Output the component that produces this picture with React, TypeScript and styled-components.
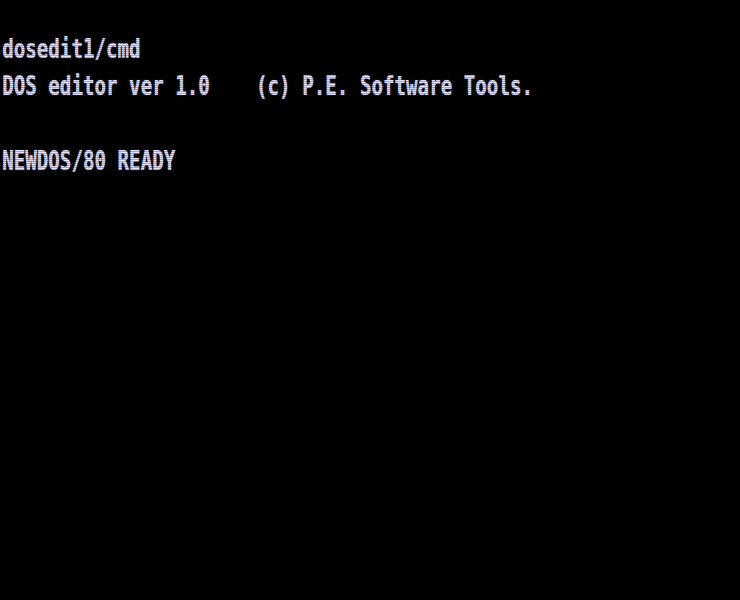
import React from "react";
import styled, { createGlobalStyle } from "styled-components";

const Global = createGlobalStyle`
  html, body {
    margin: 0;
    padding: 0;
    background: #000;
  }
  #root {
    width: 740px;
    height: 600px;
  }
`;

const Screen = styled.div`
  position: relative;
  width: 740px;
  height: 600px;
  background: #000;
  display: grid;
  grid-template-rows: repeat(16, 37.5px);
  overflow: hidden;

  &::after {
    content: "";
    position: absolute;
    inset: 0;
    pointer-events: none;
    background: repeating-linear-gradient(
      to bottom,
      rgba(0, 0, 0, 0) 0px,
      rgba(0, 0, 0, 0) 1px,
      rgba(0, 0, 0, 0.28) 1px,
      rgba(0, 0, 0, 0.28) 2px
    );
  }
`;

const Line = styled.div`
  height: 37.5px;
  padding-left: 3px;
  font-family: "DejaVu Sans Mono", "Liberation Mono", monospace;
  font-weight: bold;
  font-size: 27px;
  line-height: 22px;
  color: #e4e4ff;
  white-space: pre;
  transform: scaleX(0.71);
  transform-origin: 0 0;
  text-shadow: 0 0 1.5px rgba(200, 200, 255, 0.7);
`;

const lines = [
  "",
  "dosedit1/cmd",
  "DOS editor ver 1.0    (c) P.E. Software Tools.",
  "",
  "NEWDOS/80 READY",
];

export default function App() {
  return (
    <>
      <Global />
      <Screen>
        {lines.map((l, i) => (
          <Line key={i}>{l}</Line>
        ))}
      </Screen>
    </>
  );
}
